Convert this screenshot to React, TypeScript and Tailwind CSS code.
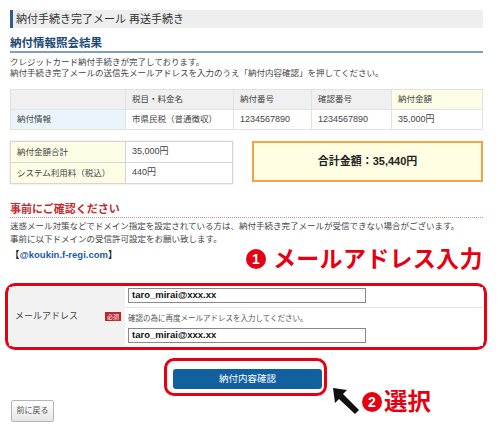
import React from 'react';

const FONT = '"Liberation Sans", "Noto Sans CJK JP", sans-serif';

export default function App() {
  return (
    <div
      className="relative w-[500px] h-[435px] bg-white overflow-hidden text-[#333]"
      style={{ fontFamily: FONT }}
    >
      <div className="pl-[10px] pr-[17px] pt-[10px]">
        {/* Page title */}
        <div className="h-[18px] flex items-center bg-[#eeeeee] border-l-[3px] border-[#2c5d8c] pl-[3px] text-[11px] text-[#333]">
          納付手続き完了メール 再送手続き
        </div>

        {/* Result heading */}
        <div className="mt-[8px] pb-[1px] border-b-2 border-[#7fa0b6]">
          <h2 className="h-[14px] leading-[14px] text-[11.5px] font-bold text-[#1d4a73]">
            納付情報照会結果
          </h2>
        </div>
        <div className="mt-[4px] text-[8.5px] leading-[11px] text-[#444]">
          <p>クレジットカード納付手続きが完了しております。</p>
          <p>納付手続き完了メールの送信先メールアドレスを入力のうえ「納付内容確認」を押してください。</p>
        </div>

        {/* Payment info table */}
        <table className="mt-[10px] w-full border-collapse text-[8.5px] text-[#444]">
          <colgroup>
            <col className="w-[115px]" />
            <col className="w-[108px]" />
            <col className="w-[78px]" />
            <col className="w-[80px]" />
            <col />
          </colgroup>
          <tbody>
            <tr className="h-[20px] bg-[#f0f0f0]">
              <td className="border border-[#e2e2e2] px-[6px]"></td>
              <td className="border border-[#e2e2e2] px-[6px]">税目・料金名</td>
              <td className="border border-[#e2e2e2] px-[6px]">納付番号</td>
              <td className="border border-[#e2e2e2] px-[6px]">確認番号</td>
              <td className="border border-[#e2e2e2] px-[6px] bg-[#fdfde6]">納付金額</td>
            </tr>
            <tr className="h-[20px] bg-white">
              <td className="border border-[#e2e2e2] px-[6px] bg-[#e9f4fb]">納付情報</td>
              <td className="border border-[#e2e2e2] px-[6px]">市県民税（普通徴収）</td>
              <td className="border border-[#e2e2e2] px-[6px] text-[9px]">1234567890</td>
              <td className="border border-[#e2e2e2] px-[6px] text-[9px]">1234567890</td>
              <td className="border border-[#e2e2e2] px-[6px] text-[9px]">35,000円</td>
            </tr>
          </tbody>
        </table>

        {/* Totals */}
        <div className="mt-[11px] flex items-start gap-[19px]">
          <table className="w-[223px] border-collapse text-[8.5px] text-[#444] shadow-[0_0_2px_rgba(0,0,0,0.15)]">
            <tbody>
              <tr className="h-[21px]">
                <td className="w-[115px] border border-[#d6d6d6] bg-[#fdfde6] px-[6px]">納付金額合計</td>
                <td className="border border-[#d6d6d6] px-[6px] text-[9px]">35,000円</td>
              </tr>
              <tr className="h-[21px]">
                <td className="border border-[#d6d6d6] bg-[#fdfde6] px-[6px]">システム利用料（税込）</td>
                <td className="border border-[#d6d6d6] px-[6px] text-[9px]">440円</td>
              </tr>
            </tbody>
          </table>
          <div className="flex-1 h-[41px] flex items-center justify-center bg-[#fffde2] border-2 border-[#f6a346] text-[11px] font-bold text-[#222]">
            合計金額：35,440円
          </div>
        </div>

        {/* Notice */}
        <div className="mt-[18px] pb-[1px] border-b border-dotted border-[#e08a8a]">
          <h3 className="h-[14px] leading-[14px] text-[11px] font-bold text-[#c42a30]">
            事前にご確認ください
          </h3>
        </div>
        <div className="mt-[2px] text-[8.5px] leading-[13px] text-[#444]">
          <p>迷惑メール対策などでドメイン指定を設定されている方は、納付手続き完了メールが受信できない場合がございます。</p>
          <p>事前に以下ドメインの受信許可設定をお願い致します。</p>
        </div>
        <p className="mt-[2px] leading-[13px] text-[9.5px] font-bold text-[#222]">
          【<span className="text-[#1a5aa8]">@koukin.f-regi.com</span>】
        </p>

        {/* Mail address form */}
        <div className="mt-[22px] -ml-[5px] -mr-[4px] border-[3px] border-[#e60012] rounded-[10px] p-[1px]">
          <div className="flex">
            <div className="w-[116px] bg-[#f2f2f2] flex items-center justify-between pl-[6px] pr-[4px]">
              <span className="text-[9px] text-[#444]">メールアドレス</span>
              <span className="h-[9px] px-[2px] flex items-center bg-[#b8282c] text-white text-[6px] leading-none">必須</span>
            </div>
            <div className="flex-1 bg-white">
              <div className="h-[21px] pt-[1px] pl-[3px] border-b border-[#e4e4e4]">
                <div className="w-[238px] h-[15px] border border-[#888] flex items-center pl-[3px] text-[9.5px] font-bold text-[#111]">
                  taro_mirai@xxx.xx
                </div>
              </div>
              <div className="h-[38px] pl-[3px]">
                <p className="pt-[6px] h-[20px] text-[7.5px] text-[#555] leading-[10px]">
                  確認の為に再度メールアドレスを入力してください。
                </p>
                <div className="w-[238px] h-[15px] border border-[#888] flex items-center pl-[3px] text-[9.5px] font-bold text-[#111]">
                  taro_mirai@xxx.xx
                </div>
              </div>
            </div>
          </div>
        </div>

        {/* Confirm button */}
        <div className="mt-[8px] flex justify-center">
          <div className="-ml-[2px] border-[3px] border-[#e60012] rounded-[10px] pl-[6px] pr-[2px] py-[4px]">
            <button className="w-[149px] h-[20px] rounded-[3px] bg-[#13609f] text-white text-[9.5px]">
              納付内容確認
            </button>
          </div>
        </div>

        {/* Back button */}
        <button className="mt-[1px] ml-[1px] w-[43px] h-[22px] rounded-[2px] border border-[#b5b5b5] bg-gradient-to-b from-white to-[#e6e6e6] text-[8px] text-[#555]">
          前に戻る
        </button>
      </div>

      {/* Annotation 1 */}
      <div className="absolute left-[246px] top-[247px] flex items-center text-[#e50012] font-bold">
        <span className="w-[20px] h-[20px] rounded-full bg-[#e50012] text-white text-[14px] leading-none flex items-center justify-center">
          1
        </span>
        <span className="ml-[7px] text-[23px] leading-[24px] tracking-[0.3px]">メールアドレス入力</span>
      </div>

      {/* Annotation 2 */}
      <svg className="absolute left-[328px] top-[383px]" width="34" height="34" viewBox="0 0 34 34">
        <path d="M5 5 L7 20 L11 16 L27 31 L31 27 L15 11 L19 7 Z" fill="#111" />
      </svg>
      <div className="absolute left-[362px] top-[390px] flex items-center text-[#e50012] font-bold">
        <span className="w-[20px] h-[20px] rounded-full bg-[#e50012] text-white text-[14px] leading-none flex items-center justify-center">
          2
        </span>
        <span className="ml-[2px] text-[23.5px] leading-[24px]">選択</span>
      </div>
    </div>
  );
}
